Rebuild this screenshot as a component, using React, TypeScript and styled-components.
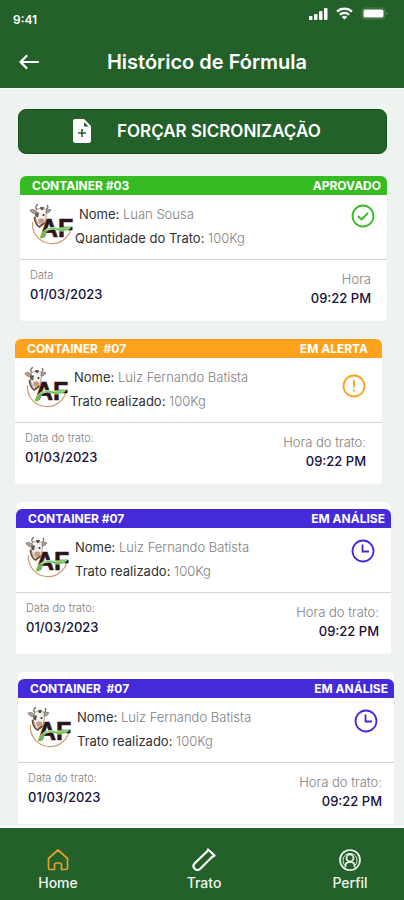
import React from "react";
import styled, { createGlobalStyle } from "styled-components";

const GlobalStyle = createGlobalStyle`
  * { box-sizing: border-box; }
  body {
    margin: 0;
    background: #eef3f0;
    font-family: Inter, "Liberation Sans", sans-serif;
  }
`;

type Status = "approved" | "alert" | "analysis";

const statusColor: Record<Status, string> = {
  approved: "#36bb23",
  alert: "#fea21e",
  analysis: "#432bda",
};

const Page = styled.div`
  display: flex;
  flex-direction: column;
  min-height: 100vh;
  background: #eef3f0;
`;

const TopBar = styled.header`
  background: #246029;
  color: #fff;
  border-bottom: 1px solid #fff;
`;

const StatusBar = styled.div`
  display: flex;
  align-items: center;
  justify-content: space-between;
  height: 40px;
  padding: 0 16px 0 13px;
`;

const Clock = styled.span`
  font-size: 12px;
  font-weight: 600;
  line-height: 16px;
`;

const Signals = styled.div`
  display: flex;
  align-items: center;
  align-self: flex-start;
  gap: 8px;
  padding-top: 7px;
`;

const TitleRow = styled.div`
  display: grid;
  grid-template-columns: 24px 1fr 20px;
  align-items: center;
  height: 48px;
  padding: 0 12px 4px 18px;
`;

const BackButton = styled.button`
  display: flex;
  padding: 0;
  border: 0;
  background: none;
  color: inherit;
  cursor: pointer;
`;

const Title = styled.h1`
  margin: 0;
  font-size: 20px;
  font-weight: 600;
  line-height: 24px;
  text-align: center;
`;

const Main = styled.main`
  flex: 1;
  padding: 20px 0 2px;
`;

const SyncButton = styled.button`
  display: flex;
  align-items: center;
  gap: 24px;
  width: calc(100% - 35px);
  height: 45px;
  margin: 0 17px 22px 18px;
  padding: 0 52px 2px;
  border: 1px solid #0f5216;
  border-radius: 8px;
  background: #246029;
  color: #fff;
  font: 600 17px/20px Inter, "Liberation Sans", sans-serif;
  white-space: nowrap;
  cursor: pointer;
`;

const CardList = styled.div`
  display: flex;
  flex-direction: column;
  gap: 18px;
`;

const Card = styled.article<{ $left: number; $right: number; $framed: boolean }>`
  margin: 0 ${(p) => p.$right}px 0 ${(p) => p.$left}px;
  padding-top: ${(p) => (p.$framed ? 7 : 0)}px;
  border-radius: 6px 6px 3px 3px;
  background: #fff;
`;

const CardHeader = styled.header<{ $color: string }>`
  display: flex;
  align-items: center;
  justify-content: space-between;
  height: 19px;
  padding: 0 6px 0 12px;
  border-radius: 6px 6px 0 0;
  background: ${(p) => p.$color};
  color: #fff;
  font-size: 12px;
  font-weight: 700;
  line-height: 16px;
  white-space: pre;
`;

const StatusLabel = styled.span<{ $inset: number }>`
  padding-right: ${(p) => p.$inset}px;
`;

const CardBody = styled.div`
  display: flex;
  height: 65px;
  padding: 7px 11px 0 9px;
  border-bottom: 1px solid #d4d6d6;
`;

const Details = styled.div`
  flex: 1;
`;

const Detail = styled.p<{ $indent?: boolean }>`
  margin: 0;
  padding-left: ${(p) => (p.$indent ? 4 : 0)}px;
  color: #808080;
  font-size: 13px;
  font-weight: 300;
  line-height: 24px;
`;

const Label = styled.span`
  color: #303030;
  font-weight: 400;
`;

const StatusMark = styled.div<{ $status: Status }>`
  padding-top: ${(p) => ({ approved: 2, alert: 9, analysis: 4 })[p.$status]}px;
  padding-right: ${(p) => (p.$status === "approved" ? 1 : 5)}px;
  color: ${(p) => statusColor[p.$status]};
`;

const CardFooter = styled.div<{ $wide: boolean }>`
  display: flex;
  justify-content: space-between;
  height: 61px;
  padding: 6px ${(p) => (p.$wide ? 12 : 16)}px 0 10px;
`;

const Moment = styled.div<{ $end?: boolean }>`
  padding-top: ${(p) => (p.$end ? 4 : 0)}px;
  text-align: ${(p) => (p.$end ? "right" : "left")};
`;

const MomentLabel = styled.div<{ $large?: boolean }>`
  color: #808080;
  font-size: ${(p) => (p.$large ? 13 : 11)}px;
  font-weight: 300;
  line-height: 18px;
`;

const MomentValue = styled.div`
  color: #16123a;
  font-size: 13px;
  font-weight: 500;
  line-height: 20px;
`;

const BottomNav = styled.nav`
  display: flex;
  justify-content: space-between;
  height: 74px;
  padding: 19px 22px 0 26px;
  border-top: 2px solid #fff;
  background: #246029;
`;

const NavLink = styled.a`
  display: flex;
  flex-direction: column;
  align-items: center;
  width: 64px;
  color: #eef5ee;
  font-size: 14px;
  font-weight: 500;
  line-height: 20px;
  text-decoration: none;
`;

const CellularIcon = () => (
  <svg width="19" height="13" viewBox="0 0 19 13" fill="#fff" aria-hidden="true">
    <rect x="0" y="9" width="3.500" height="4" rx="1" />
    <rect x="5" y="7" width="3.500" height="6" rx="1" />
    <rect x="10" y="4" width="3.500" height="9" rx="1" />
    <rect x="15" y="1" width="3.500" height="12" rx="1" />
  </svg>
);

const WifiIcon = () => (
  <svg width="17" height="13" viewBox="0 0 17 13" fill="none" stroke="#fff" strokeWidth="2.3" aria-hidden="true">
    <path d="M1 4.6a10.8 10.8 0 0 1 15 0" />
    <path d="M3.9 7.7a6.6 6.6 0 0 1 9.2 0" />
    <path d="M8.5 12.5 5.9 9.9a3.8 3.8 0 0 1 5.2 0z" fill="#fff" stroke="none" />
  </svg>
);

const BatteryIcon = () => (
  <svg width="27" height="13" viewBox="0 0 27 13" aria-hidden="true">
    <rect x="1" y="1" width="23" height="11" rx="3" fill="none" stroke="#4d7f51" />
    <rect x="2.500" y="2.500" width="20" height="8" rx="1.500" fill="#fff" />
    <path d="M25.5 5v3c1-.3 1.3-2.700 0-3z" fill="#7ba07d" />
  </svg>
);

const BackIcon = () => (
  <svg width="24" height="20" viewBox="0 0 24 20" fill="none" stroke="#fff" strokeWidth="2.2" strokeLinecap="round" strokeLinejoin="round" aria-hidden="true">
    <path d="M20 10H3M8.500 4 2.500 10l6 6" />
  </svg>
);

const FilePlusIcon = () => (
  <svg width="22" height="26" viewBox="0 0 22 26" aria-hidden="true">
    <path d="M4 1h9l7 7v14.500a2.500 2.500 0 0 1-2.500 2.500h-13A2.500 2.500 0 0 1 2 22.500V3a2 2 0 0 1 2-2z" fill="#fff" />
    <path d="M13 4v4.500h4.500z" fill="#246029" />
    <path d="M11 11v8M7 15h8" stroke="#246029" strokeWidth="1.600" />
  </svg>
);

const FarmLogo = () => (
  <svg width="46" height="46" viewBox="0 0 46 46" role="img" aria-label="AF">
    <path d="M3.500 20a19.500 19.500 0 1 0 39 4" fill="none" stroke="#c99d76" strokeWidth="1.200" />
    <path d="M7 8c1-2 9-2 11 0l-1 7-1 5-4 3-4-3-2-5z" fill="#f3f1ed" stroke="#948d84" strokeWidth=".8" />
    <path d="M8 7.500C6 6 6.500 3 9 2.500M17 7.500c2-1 2.500-3 1-4.500" fill="none" stroke="#756c60" strokeWidth="1.300" />
    <path d="M7.500 9.500C5 7 3 7 1 8c1 3 4 4 6 3.500zM17 9c2-2 4-2 5-1-1 2-3 3-5 3z" fill="#b4a08e" stroke="#655b50" strokeWidth=".6" />
    <path d="M6.500 10.500l3.500 0-1 5-2.500-1zM11 5h4l-1 3h-2z" fill="#5f5548" />
    <circle cx="14.500" cy="13" r="1" fill="#2c2620" />
    <path d="M9 18c1-2 5-2 6.500 0L14 21.500h-3.500z" fill="#c99883" />
    <path d="M5.500 15c0 5 2 8 5 10l5-4" fill="none" stroke="#6c4e35" strokeWidth="1.700" />
    <text x="11" y="35" fill="#2b1516" stroke="#2b1516" strokeWidth=".6" fontFamily="Liberation Sans, sans-serif" fontSize="25" fontWeight="700">AF</text>
    <path d="M10.500 36.500C13 29 18 24.500 26 25.500c6 .8 11 0 17-2-3 5.500-9 7-16 4.500-6-2-11 0-12.500 8.500z" fill="#5dbb35" stroke="#fff" strokeWidth=".5" />
    <path d="M17 28.500c6-5 12-1.500 17-1.500 4 0 7-1 9-3" fill="none" stroke="#b8edac" strokeWidth=".8" />
  </svg>
);

const StatusIcon = ({ status }: { status: Status }) => (
  <svg width="24" height="24" viewBox="0 0 24 24" fill="none" stroke="currentColor" strokeWidth="1.800" aria-hidden="true">
    <circle cx="12" cy="12" r="10.500" />
    {status === "approved" && <path d="m7 12 3.500 3.500L17 9" />}
    {status === "alert" && <path d="M12 6v7.500M12 15.500v2" />}
    {status === "analysis" && <path d="M11.500 5.500v7H18" />}
  </svg>
);

const HomeIcon = () => (
  <svg width="26" height="26" viewBox="0 0 26 26" fill="none" stroke="#e2a12c" strokeWidth="1.700" strokeLinejoin="round" aria-hidden="true">
    <path d="M3.500 11.500 13 3l9.500 8.500V21a1.500 1.500 0 0 1-1.500 1.500H16.500V18a2 2 0 0 0-2-2h-3a2 2 0 0 0-2 2v4.500H5A1.500 1.500 0 0 1 3.500 21z" />
  </svg>
);

const TubeIcon = () => (
  <svg width="26" height="26" viewBox="0 0 26 26" fill="none" stroke="#fff" strokeWidth="2.200" strokeLinejoin="round" aria-hidden="true">
    <path d="m17 2.500 6.500 6-2.500 1.500L9 22a3.900 3.900 0 0 1-5.500-5.500L16.500 4z" />
  </svg>
);

const ProfileIcon = () => (
  <svg width="26" height="26" viewBox="0 0 26 26" fill="none" stroke="#eef5ee" strokeWidth="1.700" aria-hidden="true">
    <circle cx="13" cy="13" r="10" />
    <circle cx="13" cy="11" r="3.500" />
    <path d="M8.500 20v-1.500c0-2.500 2-3.500 4.500-3.500s4.500 1 4.500 3.500V20" />
    <path d="M7.500 18c-3-4-1.500-11.500 5.500-11.500S21.500 14 18.500 18" strokeWidth="1" />
  </svg>
);

interface RecordData {
  container: string;
  status: Status;
  statusText: string;
  statusInset: number;
  name: string;
  amountLabel: string;
  dateLabel: string;
  timeLabel: string;
  left: number;
  right: number;
  framed: boolean;
}

const treated = {
  name: "Luiz Fernando Batista",
  amountLabel: "Trato realizado:",
  dateLabel: "Data do trato:",
  timeLabel: "Hora do trato:",
};

const records: RecordData[] = [
  {
    container: "CONTAINER #03",
    status: "approved",
    statusText: "APROVADO",
    statusInset: 0,
    name: "Luan Sousa",
    amountLabel: "Quantidade do Trato:",
    dateLabel: "Data",
    timeLabel: "Hora",
    left: 20,
    right: 17,
    framed: false,
  },
  { ...treated, container: "CONTAINER  #07", status: "alert", statusText: "EM ALERTA", statusInset: 8, left: 15, right: 22, framed: false },
  { ...treated, container: "CONTAINER #07", status: "analysis", statusText: "EM ANÁLISE", statusInset: 0, left: 16, right: 13, framed: true },
  { ...treated, container: "CONTAINER  #07", status: "analysis", statusText: "EM ANÁLISE", statusInset: 0, left: 18, right: 10, framed: true },
];

const RecordCard = ({ record }: { record: RecordData }) => (
  <Card $left={record.left} $right={record.right} $framed={record.framed}>
    <CardHeader $color={statusColor[record.status]}>
      <span>{record.container}</span>
      <StatusLabel $inset={record.statusInset}>{record.statusText}</StatusLabel>
    </CardHeader>
    <CardBody>
      <FarmLogo />
      <Details>
        <Detail $indent>
          <Label>Nome:</Label> {record.name}
        </Detail>
        <Detail $indent={record.framed}>
          <Label>{record.amountLabel}</Label> 100Kg
        </Detail>
      </Details>
      <StatusMark $status={record.status}>
        <StatusIcon status={record.status} />
      </StatusMark>
    </CardBody>
    <CardFooter $wide={record.framed}>
      <Moment>
        <MomentLabel>{record.dateLabel}</MomentLabel>
        <MomentValue>01/03/2023</MomentValue>
      </Moment>
      <Moment $end>
        <MomentLabel $large>{record.timeLabel}</MomentLabel>
        <MomentValue>09:22 PM</MomentValue>
      </Moment>
    </CardFooter>
  </Card>
);

export default function App() {
  return (
    <Page>
      <GlobalStyle />
      <TopBar>
        <StatusBar>
          <Clock>9:41</Clock>
          <Signals>
            <CellularIcon />
            <WifiIcon />
            <BatteryIcon />
          </Signals>
        </StatusBar>
        <TitleRow>
          <BackButton type="button" aria-label="Voltar">
            <BackIcon />
          </BackButton>
          <Title>Histórico de Fórmula</Title>
        </TitleRow>
      </TopBar>
      <Main>
        <SyncButton type="button">
          <FilePlusIcon />
          FORÇAR SICRONIZAÇÃO
        </SyncButton>
        <CardList>
          {records.map((record, index) => (
            <RecordCard key={index} record={record} />
          ))}
        </CardList>
      </Main>
      <BottomNav>
        <NavLink href="#home">
          <HomeIcon />
          Home
        </NavLink>
        <NavLink href="#trato">
          <TubeIcon />
          Trato
        </NavLink>
        <NavLink href="#perfil">
          <ProfileIcon />
          Perfil
        </NavLink>
      </BottomNav>
    </Page>
  );
}
